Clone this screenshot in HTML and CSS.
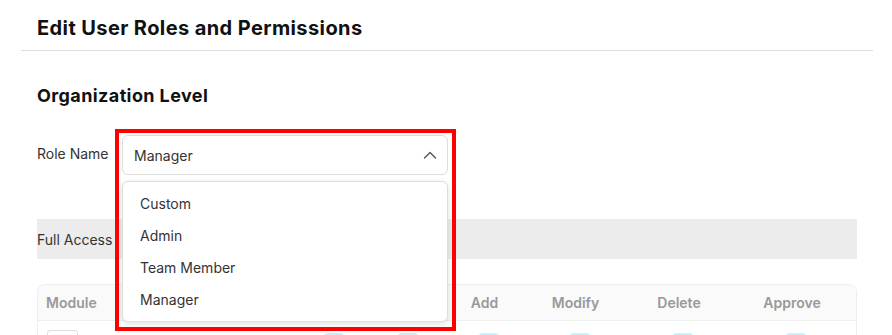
FILE: index.html
```html
<!DOCTYPE html>
<html lang="en">
<head>
    <meta charset="UTF-8">
    <meta name="viewport" content="width=device-width, initial-scale=1.0">
    <title>Edit User Roles and Permissions</title>
    <link rel="stylesheet" href="styles.css">
</head>
<body>
    <div class="page">
        <div class="page-header">
            <h1>Edit User Roles and Permissions</h1>
        </div>

        <div class="page-body">
            <h2>Organization Level</h2>

            <!-- Role selector (menu open) -->
            <div class="field-row">
                <label class="field-label">Role Name</label>
                <div class="select-wrap">
                    <div class="select-box">
                        <span>Manager</span>
                        <svg class="chevron" width="14" height="8" viewBox="0 0 14 8">
                            <path d="M1.5 7 L7 1.5 L12.5 7" fill="none" stroke="#555" stroke-width="1.4" stroke-linecap="round" stroke-linejoin="round"/>
                        </svg>
                    </div>
                    <ul class="select-menu">
                        <li>Custom</li>
                        <li>Admin</li>
                        <li>Team Member</li>
                        <li>Manager</li>
                    </ul>
                    <div class="highlight"></div>
                </div>
            </div>

            <div class="access-bar">Full Access</div>

            <div class="perm-table">
                <div class="perm-row perm-head">
                    <div class="cell module">Module</div>
                    <div class="cell">All</div>
                    <div class="cell">View</div>
                    <div class="cell">Add</div>
                    <div class="cell">Modify</div>
                    <div class="cell">Delete</div>
                    <div class="cell">Approve</div>
                </div>
                <div class="perm-row perm-body">
                    <div class="cell module"><span class="module-box"></span></div>
                    <div class="cell"><span class="check"></span></div>
                    <div class="cell"><span class="check"></span></div>
                    <div class="cell"><span class="check"></span></div>
                    <div class="cell"><span class="check"></span></div>
                    <div class="cell"><span class="check"></span></div>
                    <div class="cell"><span class="check"></span></div>
                </div>
            </div>
        </div>
    </div>
</body>
</html>
```

FILE: styles.css
```css
body {
    margin: 0;
    font-family: Inter, "Liberation Sans", sans-serif;
    background-color: #fff;
    color: #333;
    overflow: hidden;
}

.page {
    margin-left: 21px;
    width: 852px;
}

.page-header {
    padding: 16px 16px 10px;
    border-bottom: 1px solid #ddd;
}

h1 {
    margin: 0;
    font-size: 20px;
    line-height: 24px;
    font-weight: 700;
    letter-spacing: 0.4px;
    color: #111;
}

.page-body {
    padding: 33px 16px 0;
}

h2 {
    margin: 0;
    font-size: 18px;
    line-height: 24px;
    font-weight: 700;
    letter-spacing: 0.4px;
    color: #111;
}

.field-row {
    display: flex;
    align-items: center;
    margin-top: 27px;
}

.field-label {
    width: 85px;
    font-size: 14px;
    color: #333;
    margin-top: -3px;
}

.select-wrap {
    position: relative;
    width: 326px;
}

.select-box {
    height: 40px;
    box-sizing: border-box;
    border: 1px solid #ddd;
    border-radius: 6px;
    display: flex;
    align-items: center;
    justify-content: space-between;
    padding: 0 10px 0 11px;
    font-size: 14px;
    color: #333;
}

.select-menu {
    position: absolute;
    top: 46px;
    left: 0;
    right: 0;
    margin: 0;
    padding: 6px 0 5px;
    list-style: none;
    background-color: #fff;
    border: 1px solid #ddd;
    border-radius: 6px;
    box-shadow: 0 2px 6px rgba(0, 0, 0, 0.12);
    z-index: 2;
}

.select-menu li {
    height: 32px;
    line-height: 32px;
    padding-left: 17px;
    font-size: 14px;
    color: #333;
}

/* red annotation frame round the open select */
.highlight {
    position: absolute;
    left: -7px;
    top: -6px;
    width: 341px;
    height: 202px;
    box-sizing: border-box;
    border: 4px solid #ff0000;
    z-index: 3;
    pointer-events: none;
}

.access-bar {
    margin-top: 44px;
    height: 40px;
    background-color: #ececec;
    display: flex;
    align-items: center;
    font-size: 14px;
    color: #333;
}

.perm-table {
    margin-top: 25px;
    border: 1px solid #eee;
    border-radius: 8px;
}

.perm-row {
    display: grid;
    grid-template-columns: 256px 72px 76px 85px 97px 110px 116px;
}

.perm-head {
    height: 35px;
    align-items: center;
    background-color: #fafafa;
    border-bottom: 1px solid #eee;
    border-radius: 8px 8px 0 0;
}

.perm-head .cell {
    text-align: center;
    font-size: 14px;
    font-weight: 600;
    color: #999;
}

.perm-head .cell.module {
    text-align: left;
    padding-left: 8px;
}

.perm-body {
    height: 48px;
}

.perm-body .cell {
    display: flex;
    justify-content: center;
    padding-top: 12px;
}

.perm-body .cell.module {
    justify-content: flex-start;
    padding-top: 9px;
    padding-left: 9px;
}

.module-box {
    width: 31px;
    height: 28px;
    box-sizing: border-box;
    border: 1px solid #ddd;
    border-radius: 3px;
}

.check {
    width: 22px;
    height: 22px;
    margin-left: 8px;
    border-radius: 5px;
    background-color: #c9eefc;
}
```
